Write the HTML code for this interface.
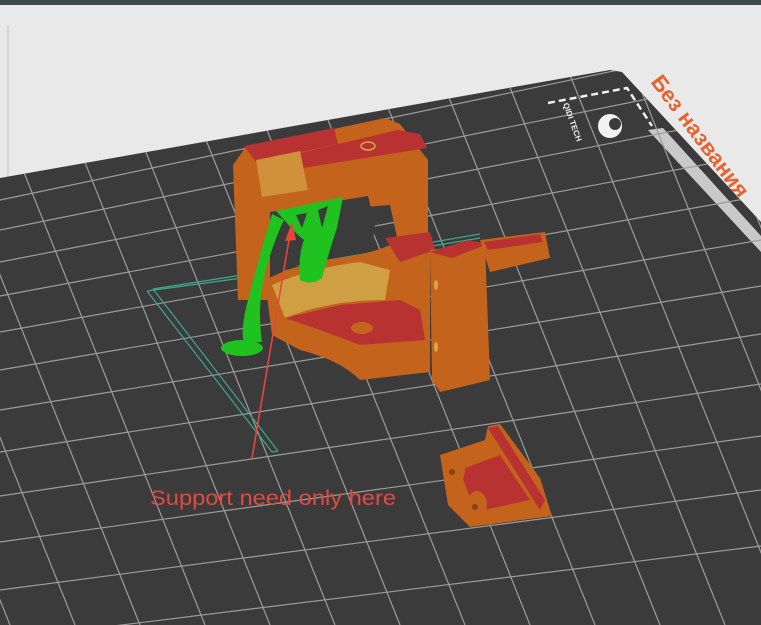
<!DOCTYPE html>
<html><head><meta charset="utf-8"><style>
html,body{margin:0;padding:0;width:761px;height:625px;overflow:hidden;background:#e9e9e9}
svg{display:block}
</style></head><body>
<svg width="761" height="625" viewBox="0 0 761 625" xmlns="http://www.w3.org/2000/svg">
<defs>
<clipPath id="bed"><polygon points="0,178 610,70 622,72 761,222 761,625 0,625"/></clipPath>
</defs>
<rect x="0" y="0" width="761" height="5" fill="#3e4b4b"/>
<line x1="8" y1="25" x2="8" y2="480" stroke="#d6d6d6" stroke-width="2"/>
<polygon points="0,178 610,70 622,72 761,222 761,625 0,625" fill="#3b3b3b"/>
<polygon points="648,130 663,128 761,236 761,252" fill="#c9c9c9" clip-path="url(#bed)"/>
<g clip-path="url(#bed)" stroke="#9c9c9c" stroke-width="1.2" fill="none">
<line x1="0" y1="200" x2="761" y2="40"/>
<line x1="0" y1="230" x2="761" y2="76"/>
<line x1="0" y1="262" x2="761" y2="114"/>
<line x1="0" y1="296" x2="761" y2="154"/>
<line x1="0" y1="332" x2="761" y2="196"/>
<line x1="0" y1="370" x2="761" y2="240"/>
<line x1="0" y1="410" x2="761" y2="286"/>
<line x1="0" y1="452" x2="761" y2="334"/>
<line x1="0" y1="496" x2="761" y2="384"/>
<line x1="0" y1="542" x2="761" y2="436"/>
<line x1="0" y1="590" x2="761" y2="490"/>
<line x1="0" y1="640" x2="761" y2="546"/>
<line x1="-120" y1="625" x2="-370" y2="0"/>
<line x1="-55" y1="625" x2="-305" y2="0"/>
<line x1="10" y1="625" x2="-240" y2="0"/>
<line x1="75" y1="625" x2="-175" y2="0"/>
<line x1="140" y1="625" x2="-110" y2="0"/>
<line x1="205" y1="625" x2="-45" y2="0"/>
<line x1="270" y1="625" x2="20" y2="0"/>
<line x1="335" y1="625" x2="85" y2="0"/>
<line x1="400" y1="625" x2="150" y2="0"/>
<line x1="465" y1="625" x2="215" y2="0"/>
<line x1="530" y1="625" x2="280" y2="0"/>
<line x1="595" y1="625" x2="345" y2="0"/>
<line x1="660" y1="625" x2="410" y2="0"/>
<line x1="725" y1="625" x2="475" y2="0"/>
<line x1="790" y1="625" x2="540" y2="0"/>
<line x1="855" y1="625" x2="605" y2="0"/>
<line x1="920" y1="625" x2="670" y2="0"/>
<line x1="985" y1="625" x2="735" y2="0"/>
</g>
<polyline points="548,103 627,88 652,126" fill="none" stroke="#f0f0f0" stroke-width="2.5" stroke-dasharray="7,4"/>
<circle cx="610" cy="126" r="12" fill="#f2f2f2"/>
<circle cx="615" cy="124" r="6" fill="#3b3b3b"/>
<text x="0" y="0" transform="translate(563,104) rotate(70)" font-family="Liberation Sans, sans-serif" font-size="8" font-weight="bold" fill="#eeeeee">QIDI TECH</text>
<text x="0" y="0" transform="translate(650,82) rotate(53)" font-family="Liberation Sans, 'DejaVu Sans', sans-serif" font-size="22" font-weight="bold" fill="#e8622e">Без названия</text>
<g stroke="#3ea88a" stroke-width="1.2" fill="none">
<polyline points="147,291 235,279 480,238"/>
<polyline points="153,289 236,276 480,234"/>
<line x1="147" y1="291" x2="272" y2="452"/>
<line x1="153" y1="289" x2="278" y2="451"/>
<line x1="272" y1="452" x2="278" y2="451"/>
</g>
<polygon points="233,165 245,148 385,118 400,124 428,160 428,240 398,242 390,205 272,215 272,300 238,300" fill="#c4631c"/>
<polygon points="244,146 334,128 338,144 256,162" fill="#b83232"/>
<polygon points="300,153 398,130 420,134 427,148 303,168" fill="#b83232"/>
<polygon points="256,160 300,151 308,190 262,197" fill="#cf913a"/>
<ellipse cx="368" cy="146" rx="7" ry="4" fill="none" stroke="#d8a848" stroke-width="1.5"/>
<polygon points="270,212 368,196 375,225 372,250 330,256 290,268 270,278" fill="#3b3b3b"/>
<path d="M265,280 Q300,262 340,258 Q380,252 400,240 L430,240 L430,372 L360,380 Q340,360 300,350 L272,335 Z" fill="#c4631c"/>
<path d="M272,285 Q310,268 360,262 L390,270 L385,300 Q330,300 285,318 Z" fill="#cfa043"/>
<polygon points="285,318 340,305 400,300 420,310 425,340 360,345 320,330" fill="#b83232"/>
<ellipse cx="362" cy="328" rx="11" ry="6" fill="#c4631c"/>
<polygon points="385,238 430,232 435,250 400,262" fill="#b83232"/>
<polygon points="430,250 485,243 490,380 440,392 432,380" fill="#c4631c"/>
<polygon points="430,252 468,240 488,244 452,258" fill="#b83232"/>
<polygon points="480,240 545,232 550,258 490,272" fill="#c4631c"/>
<polygon points="484,242 540,234 543,242 488,250" fill="#b83232"/>
<ellipse cx="436" cy="285" rx="2" ry="5" fill="#d8a848"/>
<ellipse cx="436" cy="347" rx="2" ry="5" fill="#d8a848"/>
<path d="M272,214 Q258,260 248,300 Q240,330 244,342 L262,342 Q256,300 268,262 Q276,236 284,220 Z" fill="#1fc21f"/>
<ellipse cx="242" cy="348" rx="21" ry="8" fill="#1fc21f"/>
<path d="M276,211 L343,197 L337,228 Q328,255 322,278 Q312,286 300,280 Q298,255 304,240 Q294,232 286,222 Z" fill="#1fc21f"/>
<polygon points="318,210 328,206 322,228" fill="#3b3b3b"/>
<polygon points="296,215 307,213 302,228" fill="#3b3b3b"/>
<polygon points="440,455 485,440 488,426 500,424 540,478 552,516 470,527 448,505" fill="#c4631c"/>
<polygon points="488,428 498,426 545,500 540,510" fill="#b83232"/>
<polygon points="460,470 500,455 530,500 475,512" fill="#b83232"/>
<ellipse cx="455" cy="470" rx="10" ry="14" fill="#c4631c"/>
<ellipse cx="477" cy="505" rx="10" ry="14" fill="#c4631c"/>
<circle cx="452" cy="472" r="3" fill="#8a4010"/>
<circle cx="475" cy="507" r="3" fill="#8a4010"/>
<line x1="252" y1="458" x2="290" y2="234" stroke="#e8463c" stroke-width="1.6"/>
<polygon points="292,222 285,241 296,240" fill="#e8463c"/>
<text x="150" y="505" font-family="Liberation Sans, sans-serif" font-size="21.5" fill="#e04a42" textLength="246" lengthAdjust="spacingAndGlyphs">Support need only here</text>
</svg>
</body></html>
